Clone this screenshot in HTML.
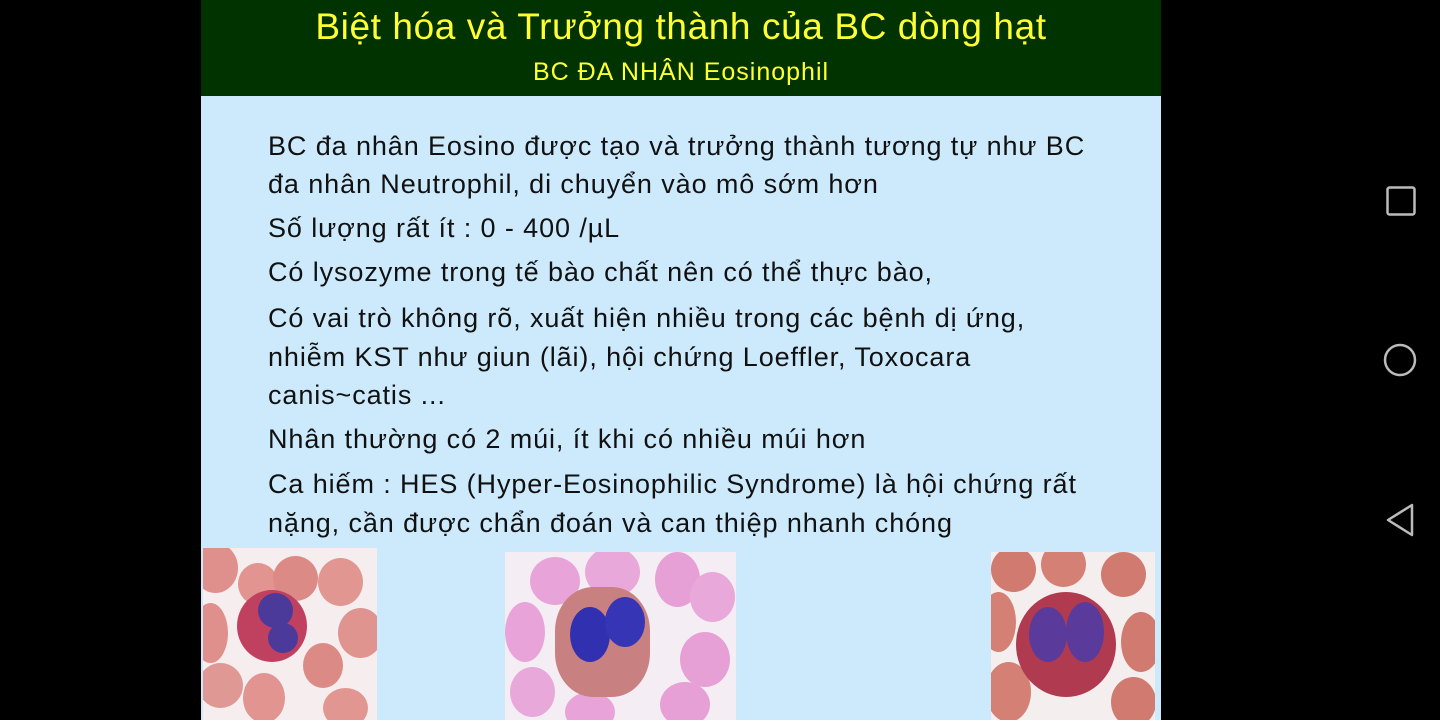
<!DOCTYPE html>
<html><head><meta charset="utf-8"><style>
body{margin:0;width:1440px;height:720px;background:#000;position:relative;overflow:hidden;font-family:"Liberation Sans","DejaVu Sans",sans-serif}
.slide{position:absolute;left:201px;top:0;width:960px;height:720px;background:#cdeafd}
.hdr{position:absolute;left:0;top:0;width:960px;height:96px;background:#003300;color:#ffff33;text-align:center}
.t1{position:absolute;top:5px;width:100%;font-size:37px;line-height:44px;letter-spacing:0.6px}
.t2{position:absolute;top:57px;width:100%;font-size:25px;line-height:30px;letter-spacing:1px}
.l{position:absolute;left:67px;font-size:27px;color:#111;white-space:nowrap;line-height:30px;letter-spacing:0.9px}
.img{position:absolute;overflow:hidden}
.rbc{position:absolute;border-radius:50%}
.nav{position:absolute}
</style></head><body>
<div class="slide">
<div class="hdr"><div class="t1">Biệt hóa và Trưởng thành của BC dòng hạt</div><div class="t2">BC ĐA NHÂN Eosinophil</div></div>
<div class="l" style="top:131px">BC đa nhân Eosino được tạo và trưởng thành tương tự như BC</div>
<div class="l" style="top:169px">đa nhân Neutrophil, di chuyển vào mô sớm hơn</div>
<div class="l" style="top:213px">Số lượng rất ít : 0 - 400 /µL</div>
<div class="l" style="top:257px">Có lysozyme trong tế bào chất nên có thể thực bào,</div>
<div class="l" style="top:303px">Có vai trò không rõ, xuất hiện nhiều trong các bệnh dị ứng,</div>
<div class="l" style="top:342px">nhiễm KST như giun (lãi), hội chứng Loeffler, Toxocara</div>
<div class="l" style="top:380px">canis~catis ...</div>
<div class="l" style="top:424px">Nhân thường có 2 múi, ít khi có nhiều múi hơn</div>
<div class="l" style="top:469px">Ca hiếm : HES (Hyper-Eosinophilic Syndrome) là hội chứng rất</div>
<div class="l" style="top:508px">nặng, cần được chẩn đoán và can thiệp nhanh chóng</div>

<div class="img" style="left:2px;top:548px;width:174px;height:172px;background:#f6eeee">
 <div class="rbc" style="left:-10px;top:-5px;width:45px;height:50px;background:#e0908c"></div>
 <div class="rbc" style="left:35px;top:15px;width:40px;height:42px;background:#e29490"></div>
 <div class="rbc" style="left:70px;top:8px;width:45px;height:45px;background:#dc8a86"></div>
 <div class="rbc" style="left:115px;top:10px;width:45px;height:48px;background:#e29692"></div>
 <div class="rbc" style="left:135px;top:60px;width:45px;height:50px;background:#e09490"></div>
 <div class="rbc" style="left:-10px;top:55px;width:35px;height:60px;background:#e0908c"></div>
 <div class="rbc" style="left:-5px;top:115px;width:45px;height:45px;background:#e09894"></div>
 <div class="rbc" style="left:40px;top:125px;width:42px;height:50px;background:#e29490"></div>
 <div class="rbc" style="left:100px;top:95px;width:40px;height:45px;background:#dc8a86"></div>
 <div class="rbc" style="left:120px;top:140px;width:45px;height:40px;background:#e29692"></div>
 <div class="rbc" style="left:34px;top:42px;width:70px;height:72px;background:#c04060"></div>
 <div class="rbc" style="left:55px;top:45px;width:35px;height:35px;background:#4b3a9a"></div>
 <div class="rbc" style="left:65px;top:75px;width:30px;height:30px;background:#4b3a9a"></div>
</div>
<div class="img" style="left:304px;top:552px;width:231px;height:168px;background:#f4eef4">
 <div class="rbc" style="left:25px;top:5px;width:50px;height:48px;background:#e8a4d8"></div>
 <div class="rbc" style="left:80px;top:-5px;width:55px;height:50px;background:#e9a8da"></div>
 <div class="rbc" style="left:150px;top:0;width:45px;height:55px;background:#e6a0d6"></div>
 <div class="rbc" style="left:185px;top:20px;width:45px;height:50px;background:#e9a8da"></div>
 <div class="rbc" style="left:0;top:50px;width:40px;height:60px;background:#e8a4d8"></div>
 <div class="rbc" style="left:175px;top:80px;width:50px;height:55px;background:#e6a0d6"></div>
 <div class="rbc" style="left:5px;top:115px;width:45px;height:50px;background:#e9a8da"></div>
 <div class="rbc" style="left:60px;top:140px;width:50px;height:40px;background:#e8a4d8"></div>
 <div class="rbc" style="left:155px;top:130px;width:50px;height:45px;background:#e6a0d6"></div>
 <div class="rbc" style="left:50px;top:35px;width:95px;height:110px;border-radius:40%;background:#c98080"></div>
 <div class="rbc" style="left:65px;top:55px;width:40px;height:55px;background:#3030b0"></div>
 <div class="rbc" style="left:100px;top:45px;width:40px;height:50px;background:#3535b5"></div>
</div>
<div class="img" style="left:790px;top:552px;width:164px;height:168px;background:#f4eeee">
 <div class="rbc" style="left:0;top:-5px;width:45px;height:45px;background:#d07a70"></div>
 <div class="rbc" style="left:50px;top:-10px;width:45px;height:45px;background:#d48074"></div>
 <div class="rbc" style="left:110px;top:0;width:45px;height:45px;background:#d07a70"></div>
 <div class="rbc" style="left:-10px;top:40px;width:35px;height:60px;background:#d48074"></div>
 <div class="rbc" style="left:130px;top:60px;width:40px;height:60px;background:#d07a70"></div>
 <div class="rbc" style="left:-5px;top:110px;width:45px;height:60px;background:#d48074"></div>
 <div class="rbc" style="left:120px;top:125px;width:45px;height:50px;background:#d07a70"></div>
 <div class="rbc" style="left:25px;top:40px;width:100px;height:105px;background:#b03a50"></div>
 <div class="rbc" style="left:38px;top:55px;width:38px;height:55px;background:#5a3a9a"></div>
 <div class="rbc" style="left:75px;top:50px;width:38px;height:60px;background:#5a3a9a"></div>
</div>
</div>
<svg class="nav" style="left:1380px;top:180px" width="40" height="360" viewBox="0 0 40 360">
 <rect x="7.5" y="7.5" width="27" height="27" rx="2" fill="none" stroke="#bbb" stroke-width="2.5"/>
 <circle cx="20" cy="180" r="15" fill="none" stroke="#bbb" stroke-width="2.5"/>
 <path d="M32 325 L8 340 L32 355 Z" fill="none" stroke="#bbb" stroke-width="2.5" stroke-linejoin="round"/>
</svg>
</body></html>
